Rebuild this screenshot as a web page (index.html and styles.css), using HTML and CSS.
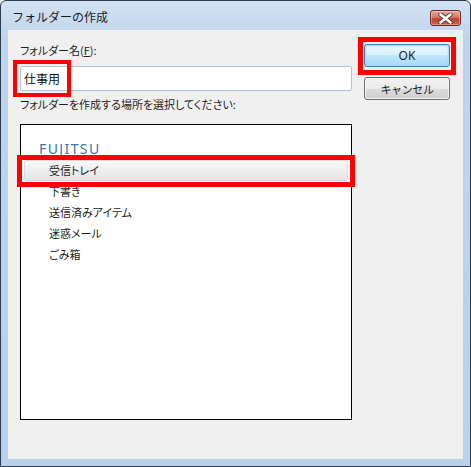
FILE: index.html
```html
<!DOCTYPE html>
<html lang="ja">
<head>
  <meta charset="UTF-8">
  <title>フォルダーの作成</title>
  <link rel="stylesheet" href="styles.css">
</head>
<body>

<div class="window">
  <div class="titlebar">
    <span class="title">フォルダーの作成</span>
    <button class="close-btn" title="閉じる">
      <svg width="17" height="11" viewBox="0 0 17 11">
        <path d="M3.5 1.5 L13.5 9.5 M13.5 1.5 L3.5 9.5" stroke="#5a3a36" stroke-width="4.4" stroke-linecap="round"/>
        <path d="M3.5 1.5 L13.5 9.5 M13.5 1.5 L3.5 9.5" stroke="#fff" stroke-width="2.6" stroke-linecap="round"/>
      </svg>
    </button>
  </div>

  <div class="client">
    <div class="main-col">
      <label class="label" for="folderName">フォルダー名(<u>F</u>):</label>
      <input class="name-input" id="folderName" type="text" value="仕事用">

      <div class="label label-place">フォルダーを作成する場所を選択してください:</div>
      <ul class="folder-list">
        <li class="account">FUJITSU</li>
        <li class="folder selected">受信トレイ</li>
        <li class="folder">下書き</li>
        <li class="folder">送信済みアイテム</li>
        <li class="folder">迷惑メール</li>
        <li class="folder">ごみ箱</li>
      </ul>
    </div>

    <div class="button-col">
      <button class="btn btn-default">OK</button>
      <button class="btn">キャンセル</button>
    </div>

    <!-- annotation boxes -->
    <div class="mark mark-input"></div>
    <div class="mark mark-ok"></div>
    <div class="mark mark-inbox"></div>
  </div>
</div>

</body>
</html>
```

FILE: styles.css
```css
body {
  margin: 0;
  background: #fff;
  font-family: "Noto Sans CJK JP", "Noto Sans", sans-serif;
  font-feature-settings: "palt" 1;
  font-size: 11px;
  color: #1e1e1e;
}

.window {
  width: 471px;
  height: 467px;
  box-sizing: border-box;
  border: 1px solid #2b3c50;
  border-radius: 6px 6px 0 0;
  background: linear-gradient(#d3e2f3, #bed4ec 40px, #b9d1ea);
  padding: 0 7px 7px 7px;
}

.titlebar {
  height: 29px;
  display: flex;
  align-items: center;
  justify-content: space-between;
  padding-left: 4px;
}

.title {
  font-size: 12px;
  font-feature-settings: normal;
  color: #1a1a1a;
  margin-top: 1px;
}

.close-btn {
  align-self: flex-start;
  width: 31px;
  height: 16px;
  margin-top: 9px;
  margin-right: 2px;
  padding: 0;
  border: 1px solid #6b2a24;
  border-radius: 3px;
  background: linear-gradient(#e8a99f, #d47667 45%, #c0432f 55%, #c8604c);
  box-shadow: inset 0 0 0 1px rgba(255,255,255,0.35);
  display: flex;
  align-items: center;
  justify-content: center;
}

.client {
  position: relative;
  height: 429px;
  box-sizing: border-box;
  background: #f0f0f0;
  padding: 13px 12px 0 12px;
  display: grid;
  grid-template-columns: 332px 86px;
  column-gap: 12px;
  align-items: start;
}

.label {
  display: block;
  line-height: 15px;
  height: 15px;
}

.name-input {
  display: block;
  width: 100%;
  height: 25px;
  box-sizing: border-box;
  margin-top: 8px;
  border: 1px solid #abc4dc;
  border-radius: 2px;
  padding: 0 3px;
  font-family: inherit;
  font-size: 12px;
  color: #111;
  background: #fff;
  outline: none;
}

.label-place {
  margin-top: 6px;
}

.folder-list {
  list-style: none;
  margin: 12px 0 0 0;
  padding: 12px 3px 0 3px;
  height: 296px;
  box-sizing: border-box;
  border: 1px solid #000;
  background: #fff;
}

.account {
  height: 23px;
  line-height: 23px;
  padding-left: 15px;
  font-family: "Noto Sans", sans-serif;
  font-size: 14px;
  letter-spacing: 1.4px;
  color: #3d72b4;
}

.folder {
  height: 21px;
  line-height: 21px;
  padding-left: 25px;
  box-sizing: border-box;
}

.folder.selected {
  border: 1px solid #d9d9d9;
  border-radius: 2px;
  background: linear-gradient(#f8f8f8, #e5e5e5);
  padding-left: 24px;
  line-height: 19px;
}

.button-col {
  display: flex;
  flex-direction: column;
  gap: 10px;
  margin-top: 1px;
}

.btn {
  height: 23px;
  padding: 0;
  border: 1px solid #707070;
  border-radius: 3px;
  background: linear-gradient(#f2f2f2, #ebebeb 50%, #dddddd 50%, #cfcfcf);
  box-shadow: inset 0 0 0 1px rgba(255,255,255,0.7);
  font-family: inherit;
  font-size: 11px;
  letter-spacing: -0.4px;
  color: #1a1a1a;
}

.btn-default {
  border-color: #3c7fb1;
  background: linear-gradient(#eaf6fd, #d9f0fc 50%, #bee6fd 50%, #a7d9f5);
  box-shadow: inset 0 0 0 1px #9ee3fb, inset 0 0 3px #7ed0f3;
  font-family: "Noto Sans", sans-serif;
  font-size: 12px;
  letter-spacing: 0;
}

.mark {
  position: absolute;
  box-sizing: border-box;
  border: 5px solid #ff0000;
}

.mark-input {
  left: 5px;
  top: 30px;
  width: 58px;
  height: 37px;
  border-width: 4px;
}

.mark-ok {
  left: 350px;
  top: 7px;
  width: 98px;
  height: 38px;
}

.mark-inbox {
  left: 9px;
  top: 125px;
  width: 338px;
  height: 32px;
}
```
